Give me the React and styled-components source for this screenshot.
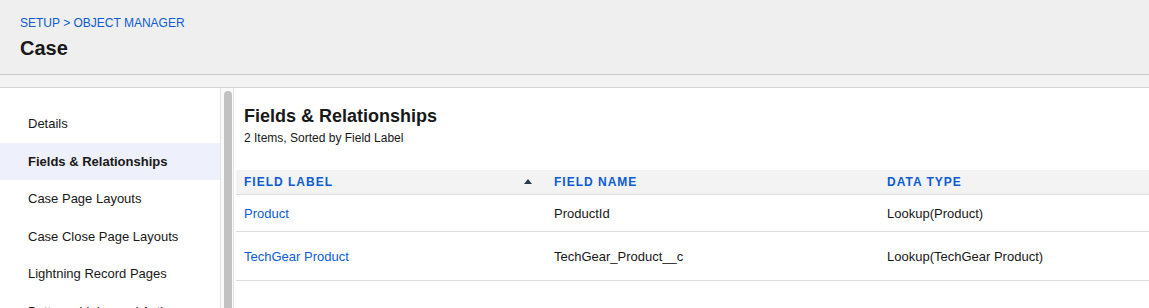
import React from "react";
import styled, { createGlobalStyle } from "styled-components";

const GlobalStyle = createGlobalStyle`
  body {
    margin: 0;
    font-family: "Liberation Sans", Arial, sans-serif;
    color: #181818;
    background: #fff;
  }
`;

const navItems = [
  "Details",
  "Fields & Relationships",
  "Case Page Layouts",
  "Case Close Page Layouts",
  "Lightning Record Pages",
  "Buttons, Links, and Actions",
];

const rows = [
  { label: "Product", name: "ProductId", type: "Lookup(Product)", h: 37 },
  { label: "TechGear Product", name: "TechGear_Product__c", type: "Lookup(TechGear Product)", h: 49 },
];

const App = () => {
  return (
    <Page>
      <GlobalStyle />
      <Header>
        <Crumbs>
          <a>SETUP</a> &gt; <a>OBJECT MANAGER</a>
        </Crumbs>
        <Title>Case</Title>
      </Header>
      <Gap />
      <Body>
        <Sidebar>
          {navItems.map((item, i) => (
            <NavItem key={i} active={i === 1}>
              {item}
            </NavItem>
          ))}
        </Sidebar>
        <Track>
          <Thumb />
        </Track>
        <Main>
          <SectionTitle>Fields &amp; Relationships</SectionTitle>
          <Sub>2 Items, Sorted by Field Label</Sub>
          <Table>
            <HeadRow>
              <HeadCell>
                FIELD LABEL
                <SortArrow />
              </HeadCell>
              <HeadCell>FIELD NAME</HeadCell>
              <HeadCell>DATA TYPE</HeadCell>
            </HeadRow>
            {rows.map((r, i) => (
              <Row key={i} h={r.h}>
                <Cell link>{r.label}</Cell>
                <Cell>{r.name}</Cell>
                <Cell>{r.type}</Cell>
              </Row>
            ))}
          </Table>
        </Main>
      </Body>
    </Page>
  );
};

const Page = styled.div`
  width: 1149px;
  height: 308px;
  overflow: hidden;
`;

const Header = styled.div`
  height: 75px;
  background: #efefef;
  border-bottom: 1px solid #c9c9c9;
  padding: 16px 20px 0;
  box-sizing: border-box;
`;

const Crumbs = styled.div`
  font-size: 12px;
  color: #0b5cd5;
  line-height: 14px;
  & a {
    color: #0b5cd5;
  }
`;

const Title = styled.h1`
  margin: 6px 0 0;
  font-size: 20px;
  font-weight: bold;
  line-height: 24px;
  color: #181818;
`;

const Gap = styled.div`
  height: 12px;
  background: #f3f3f3;
  border-bottom: 1px solid #d4d4d4;
`;

const Body = styled.div`
  display: flex;
  height: 230px;
`;

const Sidebar = styled.div`
  width: 220px;
  padding-top: 17px;
  flex-shrink: 0;
`;

const NavItem = styled.div`
  height: 37.5px;
  display: flex;
  align-items: center;
  padding-left: 28px;
  font-size: 13px;
  font-weight: ${(p) => (p.active ? "bold" : "normal")};
  background: ${(p) => (p.active ? "#eef0fb" : "transparent")};
  color: #181818;
  white-space: nowrap;
`;

const Track = styled.div`
  width: 14px;
  flex-shrink: 0;
  background: #fafafa;
  border-left: 1px solid #e3e3e3;
  border-right: 1px solid #e3e3e3;
  padding: 3px 0 0 3px;
  box-sizing: border-box;
`;

const Thumb = styled.div`
  width: 8px;
  height: 260px;
  background: #c2c2c2;
  border-radius: 4px;
`;

const Main = styled.div`
  flex: 1;
  padding-top: 17px;
  padding-left: 2px;
`;

const SectionTitle = styled.h2`
  margin: 0 0 0 8px;
  font-size: 18px;
  line-height: 22px;
  font-weight: bold;
`;

const Sub = styled.div`
  margin: 4px 0 0 8px;
  font-size: 12px;
  line-height: 15px;
`;

const Table = styled.div`
  margin-top: 24px;
`;

const grid = `
  display: grid;
  grid-template-columns: 310px 333px 1fr;
`;

const HeadRow = styled.div`
  ${grid}
  height: 24px;
  background: #f3f3f3;
  border-bottom: 1px solid #dcdcdc;
  align-items: center;
`;

const HeadCell = styled.div`
  position: relative;
  padding-left: 8px;
  font-size: 12px;
  font-weight: bold;
  letter-spacing: 1px;
  color: #0b5cd5;
`;

const SortArrow = styled.span`
  position: absolute;
  right: 14px;
  top: 50%;
  margin-top: -3px;
  width: 0;
  height: 0;
  border-left: 4px solid transparent;
  border-right: 4px solid transparent;
  border-bottom: 5px solid #2b3846;
`;

const Row = styled.div`
  ${grid}
  height: ${(p) => p.h}px;
  box-sizing: border-box;
  border-bottom: 1px solid #dcdcdc;
  align-items: center;
`;

const Cell = styled.div`
  padding-left: 8px;
  font-size: 13px;
  color: ${(p) => (p.link ? "#0b5cd5" : "#181818")};
`;

export default App;
